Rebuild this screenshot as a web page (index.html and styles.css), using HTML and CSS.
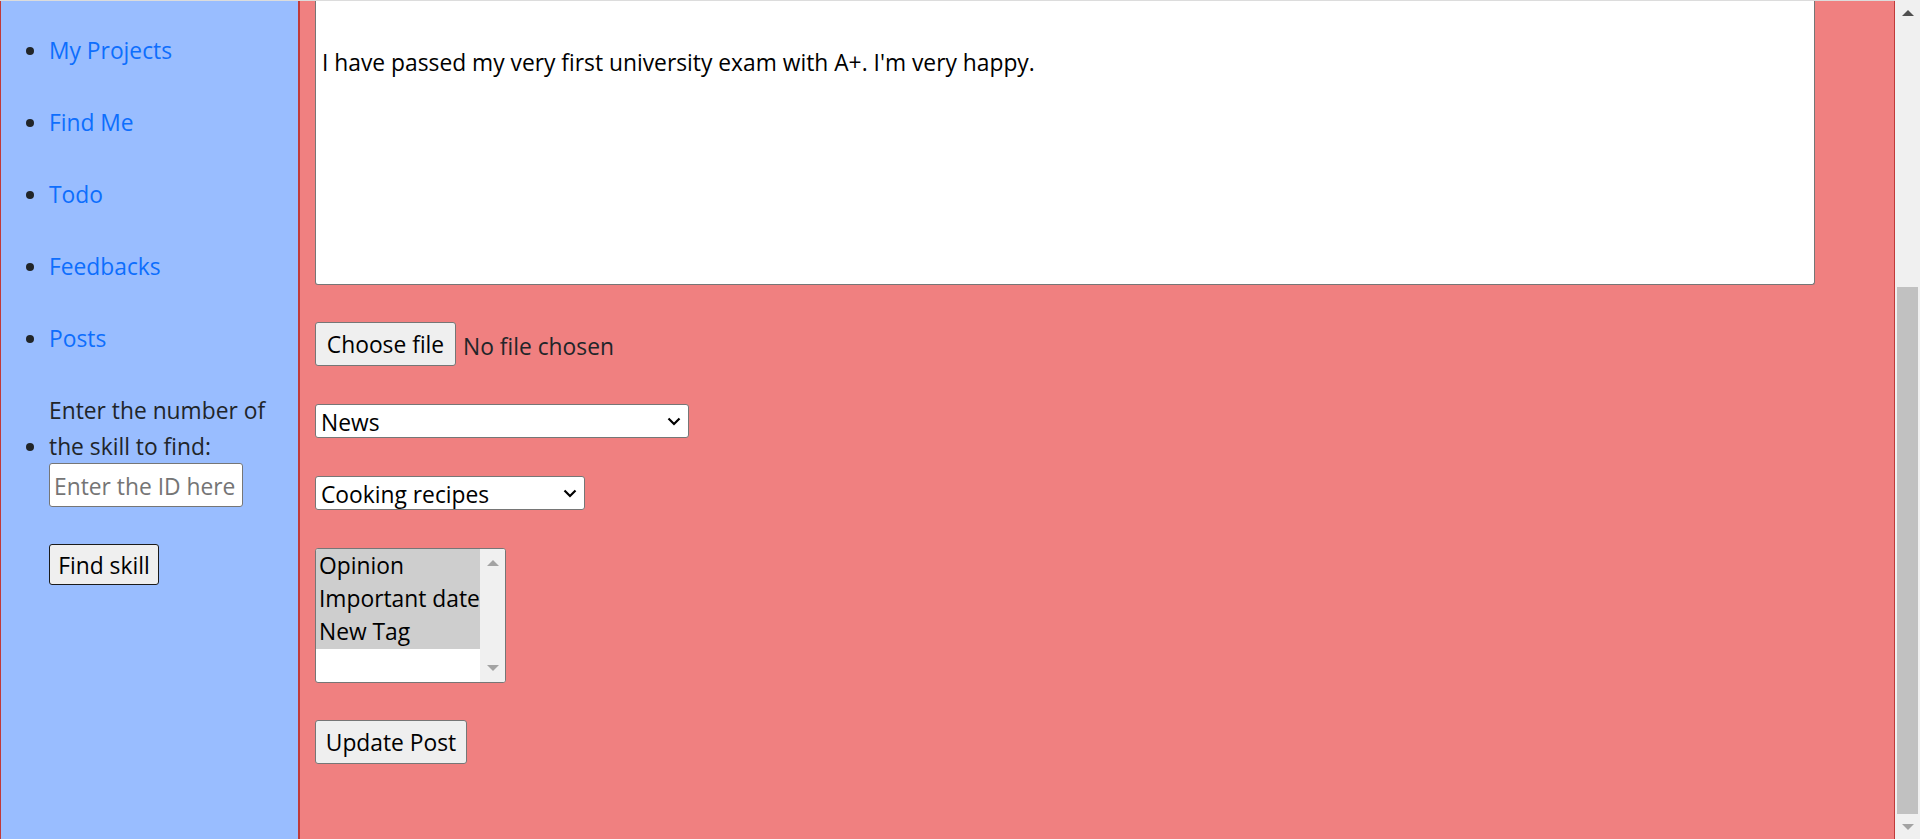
FILE: index.html
```html
<!DOCTYPE html>
<html lang="en">
<head>
<meta charset="utf-8">
<title>Update Post</title>
<link rel="stylesheet" href="styles.css">
</head>
<body>
<div class="screen">
  <div class="viewport">
    <div class="topline"></div>
    <div class="layout">
      <aside class="sidebar">
        <ul class="nav">
          <li><a href="#">My Projects</a></li>
          <li><a href="#">Find Me</a></li>
          <li><a href="#">Todo</a></li>
          <li><a href="#">Feedbacks</a></li>
          <li><a href="#">Posts</a></li>
          <li class="search">
            <label class="search-label" for="skill-id">Enter the number of<br>the skill to find:</label>
            <input id="skill-id" class="id-input" type="text" placeholder="Enter the ID here">
            <button class="btn find-btn" type="button">Find skill</button>
          </li>
        </ul>
      </aside>
      <main class="content">
        <form class="post-form">
          <textarea class="post-text">I have passed my very first university exam with A+. I'm very happy.</textarea>
          <div class="file-row">
            <span class="btn file-btn">Choose file</span>
            <span class="file-name">No file chosen</span>
          </div>
          <select class="sel sel-category">
            <option>News</option>
          </select>
          <select class="sel sel-type">
            <option>Cooking recipes</option>
          </select>
          <div class="listbox">
            <div class="lb-options">
              <div class="lb-option selected">Opinion</div>
              <div class="lb-option selected">Important date</div>
              <div class="lb-option selected">New Tag</div>
            </div>
            <div class="lb-scroll">
              <span class="tri tri-up light"></span>
              <span class="tri tri-down light"></span>
            </div>
          </div>
          <button class="btn update-btn" type="button">Update Post</button>
        </form>
      </main>
    </div>
  </div>
  <div class="scrollbar">
    <div class="sb-btn"><span class="tri tri-up dark"></span></div>
    <div class="sb-track"><div class="sb-thumb"></div></div>
    <div class="sb-btn"><span class="tri tri-down light"></span></div>
  </div>
</div>
</body>
</html>
```

FILE: styles.css
```css
* { box-sizing: border-box; }

html, body {
  margin: 0;
  padding: 0;
  height: 839px;
  overflow: hidden;
}

body {
  font-family: "Open Sans", "Noto Sans", sans-serif;
  font-size: 22.8px;
  line-height: 36px;
  color: #212529;
}

.screen {
  display: flex;
  height: 839px;
  width: 1920px;
}

.viewport {
  flex: 1;
  display: flex;
  flex-direction: column;
  min-width: 0;
}

.topline {
  height: 1px;
  background: #dcdcdc;
  flex: none;
}

.layout {
  flex: 1;
  display: flex;
  min-height: 0;
}

/* Sidebar */
.sidebar {
  width: 300px;
  flex: none;
  background: #99bdff;
  border-left: 1px solid #c03a3a;
  border-right: 2px solid #c03a3a;
}

.nav {
  margin: 0;
  padding: 32px 0 0 48px;
  list-style: disc;
}

.nav li {
  margin-bottom: 36px;
}

.nav a {
  color: #0d6efd;
  text-decoration: none;
}

.search-label {
  display: inline-block;
}

.id-input {
  display: block;
  width: 194px;
  height: 44px;
  margin-top: -2px;
  padding: 2px 4px 0;
  font-family: inherit;
  font-size: 22.8px;
  color: #000;
  background: #fff;
  border: 1px solid #767676;
  border-radius: 3px;
}

.id-input::placeholder {
  color: #757575;
}

.btn {
  display: inline-flex;
  align-items: center;
  justify-content: center;
  font-family: inherit;
  font-size: 22.8px;
  color: #000;
  background: #efefef;
  border: 1px solid #767676;
  border-radius: 3px;
  padding: 3px 0 0;
  line-height: 1;
  white-space: nowrap;
}

.find-btn {
  display: flex;
  margin-top: 37px;
  height: 41px;
  width: 110px;
  border-color: #1b1b1b;
}

/* Main content */
.content {
  flex: 1;
  background: #f08080;
  border-right: 1px solid #c03a3a;
  padding-left: 15px;
}

.post-form {
  display: flex;
  flex-direction: column;
  align-items: flex-start;
  gap: 37.4px;
}

.post-text {
  width: 1500px;
  height: 284px;
  margin: 0;
  padding: 46px 6px 0;
  font-family: inherit;
  font-size: 22.8px;
  line-height: 32px;
  color: #000;
  background: #fff;
  border: 1px solid #767676;
  border-top: none;
  border-radius: 0 0 3px 3px;
  resize: none;
  outline: none;
}

.file-row {
  display: flex;
  align-items: center;
  gap: 7px;
  height: 44px;
}

.file-btn {
  height: 44px;
  width: 141px;
}

.file-name {
  color: #212529;
  padding-top: 5px;
}

.sel {
  appearance: none;
  -webkit-appearance: none;
  height: 34.6px;
  margin: 0;
  padding: 2px 30px 0 5px;
  font-family: inherit;
  font-size: 22.8px;
  color: #000;
  border: 1px solid #767676;
  border-radius: 3px;
  background-color: #fff;
  background-image: url("data:image/svg+xml;utf8,<svg xmlns='http://www.w3.org/2000/svg' width='14' height='9' viewBox='0 0 14 9'><path d='M1.5 1.5 L7 7 L12.5 1.5' fill='none' stroke='black' stroke-width='2.2'/></svg>");
  background-repeat: no-repeat;
  background-position: right 7px center;
}

.sel-category { width: 374px; }
.sel-type { width: 270px; }

.listbox {
  display: flex;
  width: 191px;
  height: 135px;
  border: 1px solid #767676;
  border-radius: 3px;
  background: #fff;
  overflow: hidden;
}

.lb-options {
  flex: 1;
  min-width: 0;
}

.lb-option {
  height: 33.3px;
  line-height: 34px;
  padding-left: 3px;
  color: #000;
  white-space: nowrap;
  overflow: hidden;
}

.lb-option.selected {
  background: #cecece;
}

.lb-scroll {
  width: 25px;
  flex: none;
  background: #f0f0f0;
  display: flex;
  flex-direction: column;
  justify-content: space-between;
  align-items: center;
  padding: 11px 0 11px;
}

.tri {
  width: 0;
  height: 0;
  border-left: 6px solid transparent;
  border-right: 6px solid transparent;
}

.tri-up { border-bottom: 6px solid; }
.tri-down { border-top: 6px solid; }
.tri.light { border-bottom-color: #a3a3a3; border-top-color: #a3a3a3; }
.tri-up.light { border-top: none; }
.tri-down.light { border-bottom: none; }
.tri.dark { border-bottom-color: #505050; }

.update-btn {
  height: 43.6px;
  width: 152px;
}

/* Page scrollbar */
.scrollbar {
  width: 25px;
  flex: none;
  background: #f0f0f0;
  display: flex;
  flex-direction: column;
}

.sb-btn {
  height: 25px;
  flex: none;
  display: flex;
  align-items: center;
  justify-content: center;
}

.sb-track {
  flex: 1;
  display: flex;
  flex-direction: column;
  justify-content: flex-end;
  align-items: center;
}

.sb-thumb {
  width: 21px;
  height: 527px;
  background: #c1c1c1;
}
```
